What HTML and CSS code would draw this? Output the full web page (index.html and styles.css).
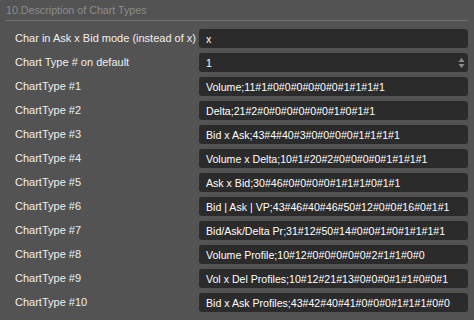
FILE: index.html
```html
<!DOCTYPE html>
<html lang="en">
<head>
    <meta charset="UTF-8">
    <title>Description of Chart Types</title>
    <link rel="stylesheet" href="styles.css">
</head>
<body>

    <div class="section">
        <!-- Section title with divider -->
        <div class="section-title">10.Description of Chart Types</div>

        <div class="fields">
            <label for="askBidChar">Char in Ask x Bid mode (instead of x)</label>
            <input type="text" id="askBidChar" value="x">

            <label for="defaultType">Chart Type # on default</label>
            <div class="spin">
                <input type="text" id="defaultType" value="1">
                <svg class="spin-arrows" width="7" height="12" viewBox="0 0 7 12">
                    <path d="M3.5 1 L6.5 5 L0.5 5 Z" fill="#8c8c8c"/>
                    <path d="M3.5 11 L6.5 7 L0.5 7 Z" fill="#8c8c8c"/>
                </svg>
            </div>

            <label for="ct1">ChartType #1</label>
            <input type="text" id="ct1" value="Volume;11#1#0#0#0#0#0#0#1#1#1#1">

            <label for="ct2">ChartType #2</label>
            <input type="text" id="ct2" value="Delta;21#2#0#0#0#0#0#0#1#0#1#1">

            <label for="ct3">ChartType #3</label>
            <input type="text" id="ct3" value="Bid x Ask;43#4#40#3#0#0#0#0#1#1#1#1">

            <label for="ct4">ChartType #4</label>
            <input type="text" id="ct4" value="Volume x Delta;10#1#20#2#0#0#0#0#1#1#1#1">

            <label for="ct5">ChartType #5</label>
            <input type="text" id="ct5" value="Ask x Bid;30#46#0#0#0#0#1#1#1#0#1#1">

            <label for="ct6">ChartType #6</label>
            <input type="text" id="ct6" value="Bid | Ask | VP;43#46#40#46#50#12#0#0#16#0#1#1">

            <label for="ct7">ChartType #7</label>
            <input type="text" id="ct7" value="Bid/Ask/Delta Pr;31#12#50#14#0#0#1#0#1#1#1#1">

            <label for="ct8">ChartType #8</label>
            <input type="text" id="ct8" value="Volume Profile;10#12#0#0#0#0#0#2#1#1#0#0">

            <label for="ct9">ChartType #9</label>
            <input type="text" id="ct9" value="Vol x Del Profiles;10#12#21#13#0#0#0#1#1#0#0#1">

            <label for="ct10">ChartType #10</label>
            <input type="text" id="ct10" value="Bid x Ask Profiles;43#42#40#41#0#0#0#1#1#1#0#0">
        </div>
    </div>

</body>
</html>
```

FILE: styles.css
```css
/* Fond gris et police du panneau */
body {
    margin: 0;
    background-color: #535353;
    font-family: "Liberation Sans", Arial, sans-serif;
    font-size: 11px;
    color: #f0f0f0;
}

.section {
    margin: 0 6px 0 5px;
}

/* Titre de la section avec la ligne dessous */
.section-title {
    height: 20px;
    line-height: 20px;
    padding-left: 1px;
    font-size: 10.7px;
    color: #8c8c8c;
    border-bottom: 1px solid #6f6f6f;
}

/* Deux colonnes : libellé et champ */
.fields {
    display: grid;
    grid-template-columns: 184px 1fr;
    grid-auto-rows: 19px;
    row-gap: 5px;
    padding: 8px 0 0 10px;
}

label {
    line-height: 19px;
    white-space: nowrap;
}

input[type="text"] {
    width: 100%;
    height: 19px;
    margin: 0;
    padding: 0 7px;
    border: none;
    border-radius: 3px;
    background-color: #2b2b2b;
    color: #ffffff;
    font-family: inherit;
    font-size: 10.6px;
    box-sizing: border-box;
    outline: none;
}

/* Champ numérique avec flèches */
.spin {
    position: relative;
}

.spin-arrows {
    position: absolute;
    right: 3px;
    top: 4px;
}
```
